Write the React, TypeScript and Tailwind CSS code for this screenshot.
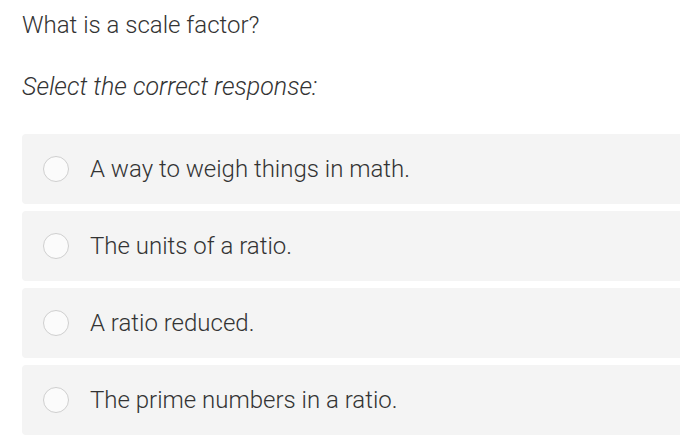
const options = [
  'A way to weigh things in math.',
  'The units of a ratio.',
  'A ratio reduced.',
  'The prime numbers in a ratio.',
]

export default function App() {
  return (
    <div className="w-[680px] h-[440px] overflow-hidden bg-white font-['Roboto',sans-serif] font-light text-[#333]">
      <div className="pl-[22px] pt-[11px]">
        <h1 className="text-[24px] leading-[28px] font-light">What is a scale factor?</h1>
        <p className="mt-[34px] text-[25px] leading-[28px] italic">Select the correct response:</p>
      </div>

      <ul className="mt-[33px] pl-[22px] flex flex-col gap-[7px]">
        {options.map((text) => (
          <li
            key={text}
            className="h-[70px] rounded-l-[4px] bg-[#f4f4f4] flex items-center pl-[21px]"
          >
            <span className="w-[26px] h-[26px] rounded-full border border-[#cfcfcf] bg-[#fbfbfb] shrink-0" />
            <span className="ml-[21px] text-[24px] leading-[28px]">{text}</span>
          </li>
        ))}
      </ul>
    </div>
  )
}
